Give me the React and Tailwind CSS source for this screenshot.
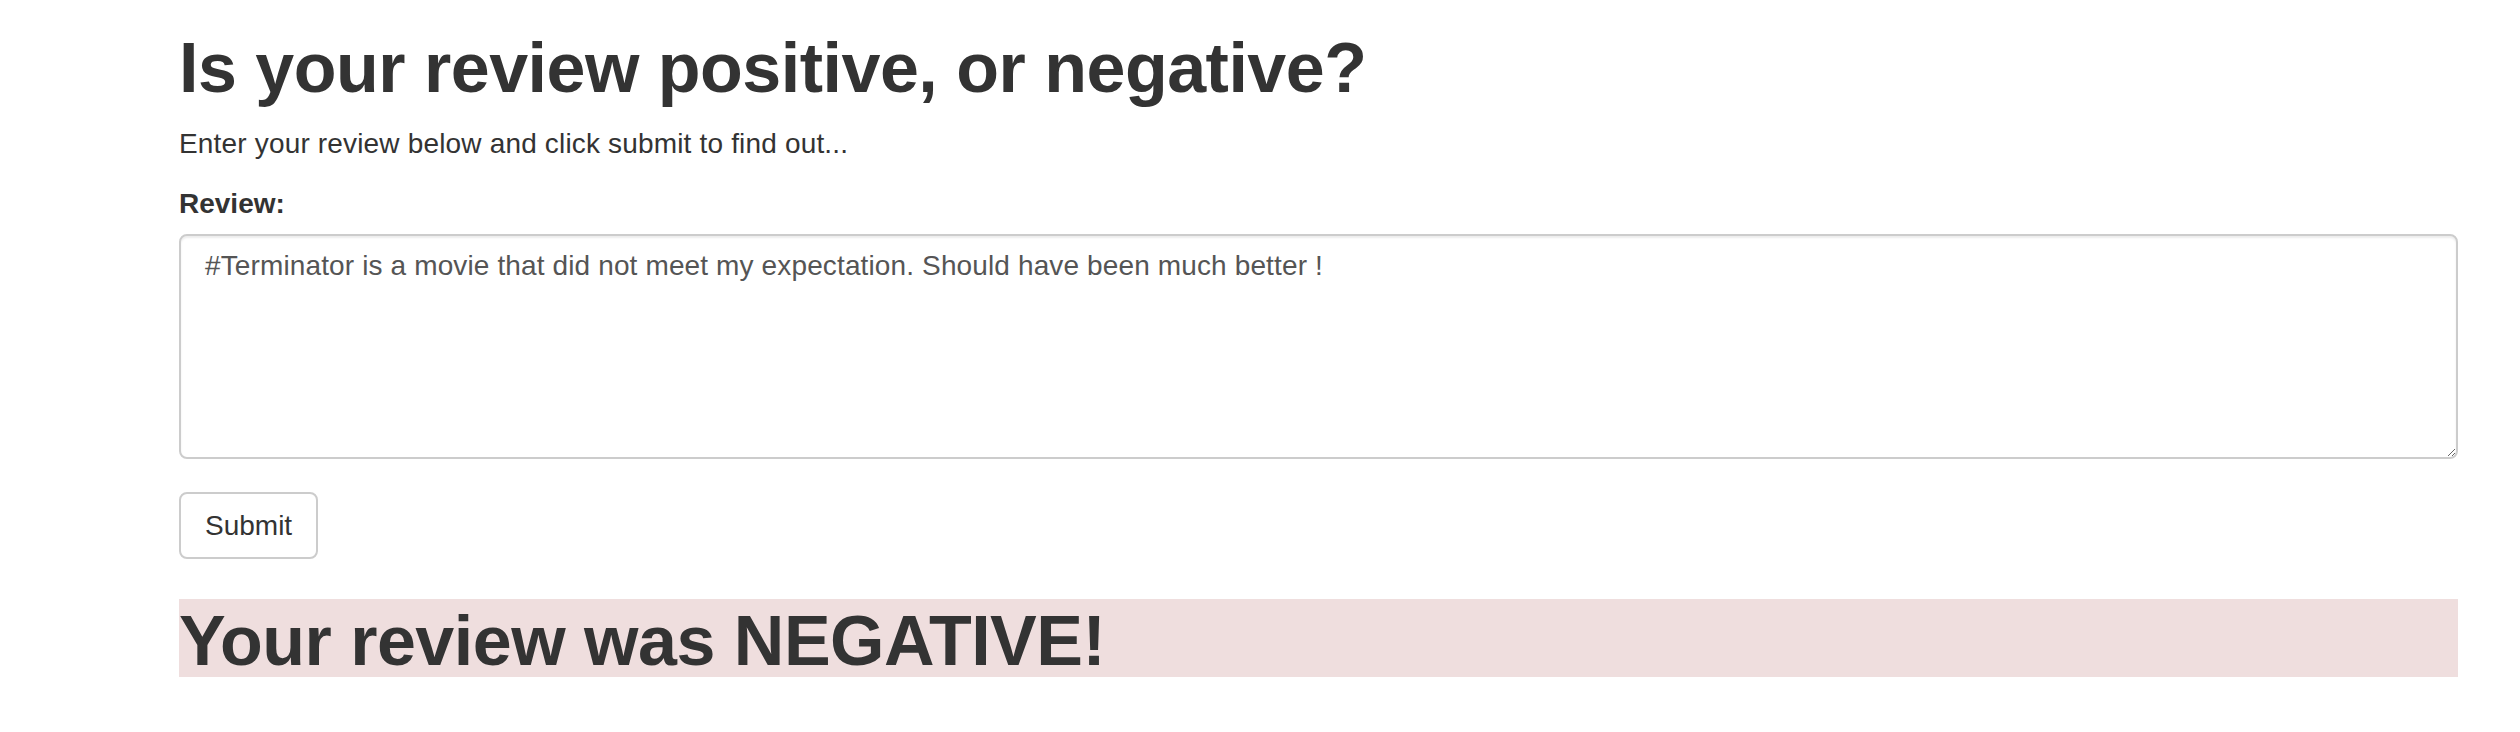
import React from 'react';

const App = () => {
  return (
    <div className="min-h-screen bg-white pl-[179px] pr-[62px] pt-[30px] font-['Liberation_Sans',Arial,sans-serif] text-[#333]">
      <h1 className="text-[70px] leading-[77px] font-bold tracking-[-0.5px]">
        Is your review positive, or negative?
      </h1>
      <p className="mt-[17px] text-[28px] leading-[40px] tracking-[0.17px]">
        Enter your review below and click submit to find out...
      </p>

      <form className="mt-[20px]" onSubmit={(e) => e.preventDefault()}>
        <label htmlFor="review" className="block text-[28px] leading-[40px] font-bold">
          Review:
        </label>
        <textarea
          id="review"
          defaultValue="#Terminator is a movie that did not meet my expectation. Should have been much better !"
          className="mt-[10px] block w-full h-[225px] border-2 border-[#ccc] rounded-[8px] px-[24px] pt-[10px] text-[28px] leading-[40px] tracking-[0.13px] text-[#555] font-['Liberation_Sans',Arial,sans-serif] shadow-[inset_0_2px_2px_rgba(0,0,0,0.075)] outline-none"
        />
        <button
          type="submit"
          className="mt-[33px] flex items-center h-[67px] px-[24px] bg-white border-2 border-[#ccc] rounded-[8px] text-[28px] leading-[40px] text-[#333]"
        >
          Submit
        </button>
      </form>

      <h1 className="mt-[40px] h-[78px] pt-[6px] bg-[#efdede] text-[70px] leading-[72px] font-bold tracking-[-0.5px]">
        Your review was NEGATIVE!
      </h1>
    </div>
  );
};

export default App;
